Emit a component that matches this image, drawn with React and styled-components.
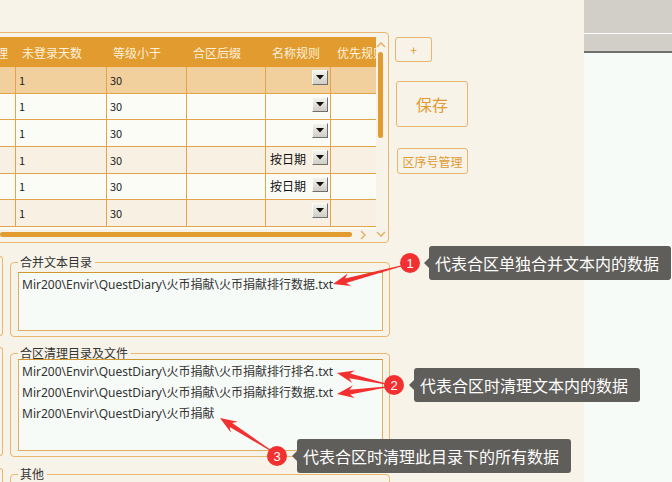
import React from "react";
import styled, { createGlobalStyle } from "styled-components";

const GlobalStyle = createGlobalStyle`
  html, body { margin: 0; padding: 0; }
  body {
    width: 672px;
    height: 482px;
    overflow: hidden;
    background: #f8f3e8;
    font-family: "Noto Sans", "Noto Sans CJK SC", sans-serif;
  }
`;

const COLS = [16, 91, 80, 79, 65, 70];
const HEAD = ["处理", "未登录天数", "等级小于", "合区后缀", "名称规则", "优先规则"];
const ROWS = [
  { tone: "sel", rule: "" },
  { tone: "light", rule: "" },
  { tone: "light", rule: "" },
  { tone: "cream", rule: "按日期" },
  { tone: "light", rule: "按日期" },
  { tone: "cream", rule: "" },
];
const TONES = { sel: "#f2d09d", light: "#fbfcf6", cream: "#f8f0e2" };

const MERGE_FILES = ["Mir200\\Envir\\QuestDiary\\火币捐献\\火币捐献排行数据.txt"];
const CLEAN_FILES = [
  "Mir200\\Envir\\QuestDiary\\火币捐献\\火币捐献排行排名.txt",
  "Mir200\\Envir\\QuestDiary\\火币捐献\\火币捐献排行数据.txt",
  "Mir200\\Envir\\QuestDiary\\火币捐献",
];

const ARROWS = [
  [401, 266, 333, 284],
  [386, 384, 337, 373],
  [386, 387, 337, 394],
  [270, 450, 220, 418],
];

const NOTES = [
  { n: 1, cx: 410, cy: 263, x: 429, y: 246, text: "代表合区单独合并文本内的数据" },
  { n: 2, cx: 394, cy: 385, x: 414, y: 368, text: "代表合区时清理文本内的数据" },
  { n: 3, cx: 277, cy: 456, x: 297, y: 439, text: "代表合区时清理此目录下的所有数据" },
];

// polygon for a tapered annotation arrow, tail -> tip
const arrowPoints = (x1, y1, x2, y2) => {
  const dx = x2 - x1, dy = y2 - y1;
  const len = Math.hypot(dx, dy);
  const ux = dx / len, uy = dy / len;
  const nx = -uy, ny = ux;
  const head = 17, neck = 13;
  const bx = x2 - ux * head, by = y2 - uy * head;
  const kx = x2 - ux * neck, ky = y2 - uy * neck;
  const p = (x, y) => `${x.toFixed(1)},${y.toFixed(1)}`;
  return [
    p(x1 + nx * 0.6, y1 + ny * 0.6),
    p(kx + nx * 2.4, ky + ny * 2.4),
    p(bx + nx * 6.5, by + ny * 6.5),
    p(x2, y2),
    p(bx - nx * 6.5, by - ny * 6.5),
    p(kx - nx * 2.4, ky - ny * 2.4),
    p(x1 - nx * 0.6, y1 - ny * 0.6),
  ].join(" ");
};

const Chevron = ({ dir }) => {
  const pts = {
    up: "1,6 5,2 9,6",
    down: "1,2 5,6 9,2",
    right: "2,1 6,5 2,9",
  }[dir];
  return (
    <svg width="10" height="10" viewBox="0 0 10 10">
      <polyline points={pts} fill="none" stroke="#e6b472" strokeWidth="1.6" />
    </svg>
  );
};

const DropButton = () => (
  <DropBox>
    <svg width="8" height="5" viewBox="0 0 8 5">
      <polygon points="0,0 8,0 4,4.5" fill="#111" />
    </svg>
  </DropBox>
);

export default function App() {
  return (
    <Root>
      <GlobalStyle />
      <LeftPanel>
        <TopRow>
          <TableFrame>
            <Viewport>
              <HeaderRow>
                {HEAD.map((h, i) => (
                  <HeadCell key={h} $w={COLS[i]} $clip={i === 0}>
                    {h}
                  </HeadCell>
                ))}
              </HeaderRow>
              {ROWS.map((r, ri) => (
                <BodyRow key={ri} $tone={r.tone}>
                  <Cell $w={COLS[0]} />
                  <Cell $w={COLS[1]}>1</Cell>
                  <Cell $w={COLS[2]}>30</Cell>
                  <Cell $w={COLS[3]} />
                  <RuleCell $w={COLS[4]}>
                    <RuleText>{r.rule}</RuleText>
                    <DropButton />
                  </RuleCell>
                  <Cell $w={COLS[5]} />
                </BodyRow>
              ))}
            </Viewport>
            <VScroll>
              <Chevron dir="up" />
              <VThumb />
            </VScroll>
            <HScroll>
              <HThumb />
              <Chevron dir="right" />
            </HScroll>
            <Corner>
              <Chevron dir="down" />
            </Corner>
          </TableFrame>
          <ButtonColumn>
            <ActionButton $w={37} $h={25} $fs={12}>+</ActionButton>
            <ActionButton $w={72} $h={46} $fs={16} $mt={19} $ml={1}>保存</ActionButton>
            <ActionButton $w={71} $h={26} $fs={12} $mt={21} $ml={2}>区序号管理</ActionButton>
          </ButtonColumn>
        </TopRow>

        <SectionRow $mt={13}>
          <Stub />
          <Group $pt={4}>
            <Legend>合并文本目录</Legend>
            <TextBox $h={59}>
              {MERGE_FILES.map((f) => (
                <div key={f}>{f}</div>
              ))}
            </TextBox>
          </Group>
        </SectionRow>

        <SectionRow $mt={10}>
          <Stub />
          <Group $pt={0}>
            <Legend>合区清理目录及文件</Legend>
            <TextBox $h={92}>
              {CLEAN_FILES.map((f) => (
                <div key={f}>{f}</div>
              ))}
            </TextBox>
          </Group>
        </SectionRow>

        <SectionRow $mt={11}>
          <Stub />
          <Group $pt={4}>
            <Legend>其他</Legend>
            <TextBox $h={40} $bare />
          </Group>
        </SectionRow>
      </LeftPanel>

      <RightPanel>
        <TopBar />
        <SubBar />
        <RightBody />
      </RightPanel>

      <Overlay>
        <ArrowLayer width="672" height="482" viewBox="0 0 672 482">
          {ARROWS.map((a, i) => (
            <polygon key={i} points={arrowPoints(...a)} fill="#f2302f" />
          ))}
        </ArrowLayer>
        {NOTES.map((n) => (
          <React.Fragment key={n.n}>
            <Badge $x={n.cx} $y={n.cy}>{n.n}</Badge>
            <Callout $x={n.x} $y={n.y}>{n.text}</Callout>
          </React.Fragment>
        ))}
      </Overlay>
    </Root>
  );
}

const Root = styled.div`
  position: relative;
  display: flex;
  width: 672px;
  height: 482px;
  overflow: hidden;
`;

const LeftPanel = styled.div`
  width: 584px;
  flex-shrink: 0;
  padding-top: 32px;
  box-sizing: border-box;
  background: #f8f3e8;
  overflow: hidden;
`;

const TopRow = styled.div`
  display: flex;
  align-items: flex-start;
`;

const TableFrame = styled.div`
  margin-left: -10px;
  width: 399px;
  height: 211px;
  box-sizing: border-box;
  border: 1px solid #e8b66e;
  border-radius: 4px;
  padding: 4px 0 2px 9px;
  display: grid;
  grid-template-columns: 376px 12px;
  grid-template-rows: 192px 11px;
`;

const Viewport = styled.div`
  overflow: hidden;
  background: #fbfcf6;
`;

const HeaderRow = styled.div`
  display: flex;
  height: 30px;
  background: #e19b2e;
`;

const HeadCell = styled.div`
  flex: 0 0 ${(p) => p.$w}px;
  display: flex;
  align-items: center;
  justify-content: ${(p) => (p.$clip ? "flex-end" : "flex-start")};
  padding: ${(p) => (p.$clip ? "0 8px 0 0" : "0 0 0 6px")};
  box-sizing: border-box;
  overflow: hidden;
  white-space: nowrap;
  font-family: "Noto Sans CJK SC", sans-serif;
  font-size: 12px;
  color: #fdf1dc;
`;

const BodyRow = styled.div`
  display: flex;
  height: 26.67px;
  box-sizing: border-box;
  border-bottom: 1px solid #e3a54c;
  background: ${(p) => TONES[p.$tone]};
`;

const Cell = styled.div`
  flex: 0 0 ${(p) => p.$w}px;
  box-sizing: border-box;
  border-right: 1px solid #e3a54c;
  padding: 0 0 0 3px;
  display: flex;
  align-items: center;
  font-family: "Noto Sans CJK SC", sans-serif;
  font-size: 11px;
  color: #222;
`;

const RuleCell = styled(Cell)`
  align-items: flex-start;
  padding: 3px 2px 0 4px;
  justify-content: space-between;
`;

const RuleText = styled.span`
  font-size: 12px;
  line-height: 18px;
  color: #111;
`;

const DropBox = styled.div`
  width: 16px;
  height: 15px;
  box-sizing: border-box;
  display: flex;
  align-items: center;
  justify-content: center;
  background: linear-gradient(#f4f3ee, #cfcdc4);
  border: 1px solid;
  border-color: #fbfbf8 #6f6f6b #6f6f6b #fbfbf8;
`;

const VScroll = styled.div`
  display: flex;
  flex-direction: column;
  align-items: flex-start;
  padding: 4px 0 0 0;
`;

const VThumb = styled.div`
  margin: 1px 0 0 2px;
  width: 5px;
  height: 86px;
  border-radius: 3px;
  background: #e19b2e;
`;

const HScroll = styled.div`
  display: flex;
  align-items: center;
  gap: 7px;
`;

const HThumb = styled.div`
  width: 352px;
  height: 5px;
  border-radius: 3px;
  background: #e19b2e;
`;

const Corner = styled.div`
  display: flex;
  align-items: center;
  padding-left: 0;
`;

const ButtonColumn = styled.div`
  display: flex;
  flex-direction: column;
  align-items: flex-start;
  margin-left: 6px;
  padding-top: 5px;
`;

const ActionButton = styled.button`
  width: ${(p) => p.$w}px;
  height: ${(p) => p.$h}px;
  margin: ${(p) => p.$mt || 0}px 0 0 ${(p) => p.$ml || 0}px;
  padding: 0;
  border: 1px solid #e8b56c;
  border-radius: 3px;
  background: transparent;
  color: #e19a33;
  font-family: "Noto Sans CJK SC", sans-serif;
  font-size: ${(p) => p.$fs}px;
  white-space: nowrap;
`;

const SectionRow = styled.div`
  display: flex;
  margin-top: ${(p) => p.$mt}px;
`;

const Stub = styled.div`
  width: 3px;
  margin: 0 7px 1px 0;
  box-sizing: border-box;
  border: 1px solid #e8b870;
  border-left: none;
  border-radius: 0 4px 4px 0;
`;

const Group = styled.fieldset`
  margin: 0;
  width: 380px;
  box-sizing: border-box;
  border: 1px solid #e8b870;
  border-radius: 4px;
  padding: ${(p) => p.$pt}px 6px 5px 7px;
  min-inline-size: 0;
`;

const Legend = styled.legend`
  padding: 0 3px 0 2px;
  font-family: "Noto Sans CJK SC", sans-serif;
  font-size: 12px;
  line-height: 12px;
  color: #333;
`;

const TextBox = styled.div`
  height: ${(p) => p.$h}px;
  box-sizing: border-box;
  border: ${(p) => (p.$bare ? "none" : "1px solid #dfae5e")};
  border-top-color: #cf982f;
  background: ${(p) => (p.$bare ? "transparent" : "#f7fbf8")};
  padding: 1px 3px;
  font-family: "Noto Sans", "Noto Sans CJK SC", sans-serif;
  font-size: 12px;
  line-height: 21px;
  color: #333;
  white-space: nowrap;
  overflow: hidden;
`;

const RightPanel = styled.div`
  flex: 1;
  display: flex;
  flex-direction: column;
`;

const TopBar = styled.div`
  height: 33px;
  background: #d1cfc8;
  border-bottom: 1px solid #ffffff;
`;

const SubBar = styled.div`
  height: 17px;
  background: #d1cfc8;
  border-bottom: 2px solid #6f6f6d;
`;

const RightBody = styled.div`
  flex: 1;
  background: #f7fbf8;
`;

const Overlay = styled.div`
  position: absolute;
  inset: 0;
  pointer-events: none;
`;

const ArrowLayer = styled.svg`
  position: absolute;
  left: 0;
  top: 0;
`;

const Badge = styled.div`
  position: absolute;
  left: ${(p) => p.$x - 10}px;
  top: ${(p) => p.$y - 10}px;
  width: 20px;
  height: 20px;
  border-radius: 50%;
  background: #f2302f;
  color: #fff;
  display: flex;
  align-items: center;
  justify-content: center;
  font-family: "Liberation Sans", sans-serif;
  font-size: 13px;
`;

const Callout = styled.div`
  position: absolute;
  left: ${(p) => p.$x}px;
  top: ${(p) => p.$y}px;
  height: 34px;
  padding: 0 12px 0 6px;
  display: flex;
  align-items: center;
  white-space: nowrap;
  border-radius: 3px;
  background: #5f5e5a;
  color: #fff;
  font-family: "Noto Sans CJK SC", sans-serif;
  font-size: 16px;

  &::before {
    content: "";
    position: absolute;
    left: -5px;
    top: 50%;
    margin-top: -5px;
    border-style: solid;
    border-width: 5px 5px 5px 0;
    border-color: transparent #5f5e5a transparent transparent;
  }
`;
